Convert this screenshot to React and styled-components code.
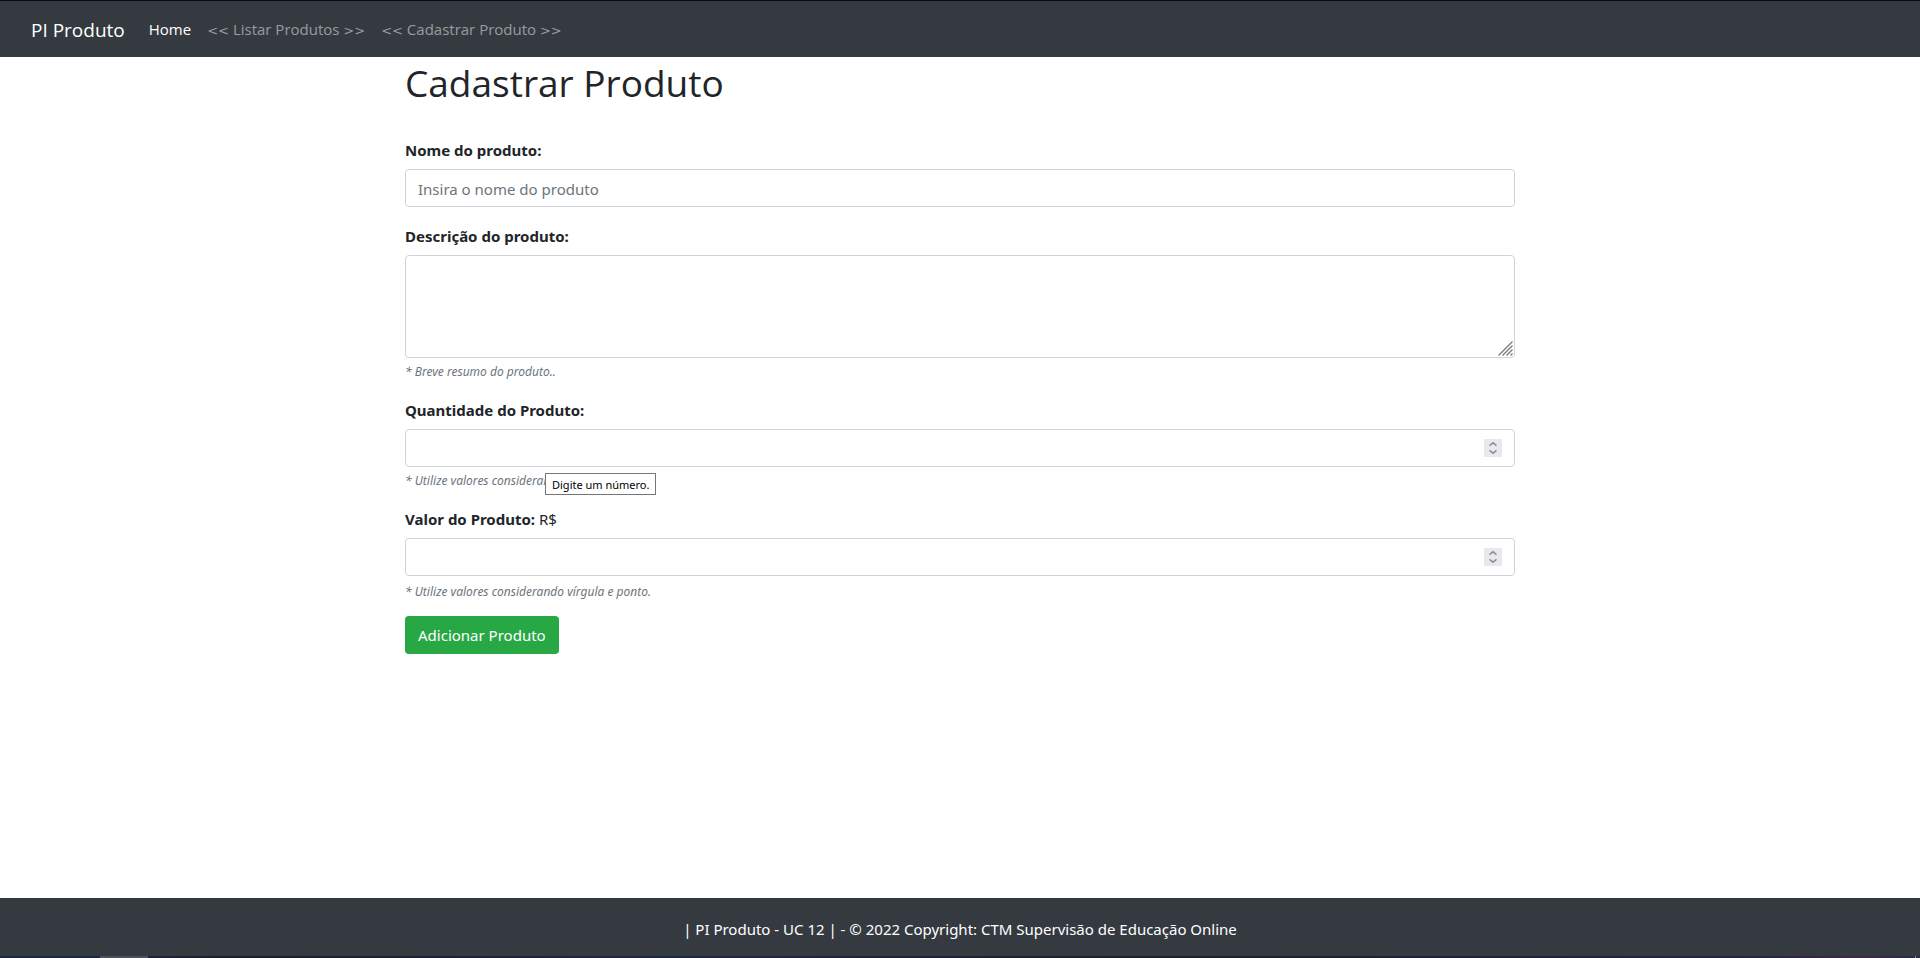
import React from "react";
import styled, { createGlobalStyle } from "styled-components";

const GlobalStyle = createGlobalStyle`
  *, *::before, *::after { box-sizing: border-box; }
  body {
    margin: 0;
    background: #fff;
    color: #212529;
    font-family: "Segoe UI", "Noto Sans", "Open Sans", sans-serif;
    font-size: 15px;
    line-height: 24px;
  }
`;

const Page = styled.div`
  min-height: 100vh;
  display: flex;
  flex-direction: column;
`;

const Navbar = styled.nav`
  display: flex;
  align-items: center;
  min-height: 57px;
  padding: 2px 31px 0;
  border-top: 1px solid #0c0c0e;
  background: #353a41;
`;

const Brand = styled.a`
  margin-right: 16px;
  color: #fff;
  font-family: "Segoe UI", "Open Sans", sans-serif;
  font-size: 19px;
  line-height: 30px;
  text-decoration: none;
  white-space: nowrap;
`;

const NavList = styled.ul`
  display: flex;
  margin: 0;
  padding: 0;
  list-style: none;
`;

const NavLink = styled.a`
  display: block;
  padding: 8px;
  color: ${(p) => (p.$active ? "#fff" : "#999c9f")};
  font-family: "Segoe UI", "Open Sans", sans-serif;
  text-decoration: none;
  white-space: nowrap;
`;

const Chevrons = styled.span`
  font-family: "DejaVu Sans", sans-serif;
  font-size: 13px;
`;

const Main = styled.main`
  flex: 1;
  width: 100%;
  max-width: 1140px;
  margin: 0 auto;
  padding: 0 15px 32px;
`;

const Title = styled.h1`
  margin: 0 0 28px;
  font-family: "Segoe UI", "Open Sans", sans-serif;
  font-size: 37px;
  font-weight: 400;
  line-height: 52px;
`;

const Field = styled.div`
  position: relative;
  margin-bottom: ${(p) => (p.$tight ? 12 : 16)}px;
`;

const Label = styled.label`
  display: block;
  margin-bottom: 6px;
  font-weight: ${(p) => (p.$plain ? 400 : 700)};
  line-height: 26px;
`;

const Control = styled.div`
  position: relative;
  display: flex;
`;

const Input = styled.input`
  width: 100%;
  height: 38px;
  padding: 8px 12px 6px;
  border: 1px solid #ced4da;
  border-radius: 4px;
  background: #fff;
  color: #495057;
  font: inherit;
  appearance: textfield;
  &::placeholder { color: #6c757d; opacity: 1; }
  &::-webkit-inner-spin-button { appearance: none; }
`;

const TextArea = styled(Input).attrs({ as: "textarea" })`
  height: 103px;
  resize: none;
`;

const Spinner = styled.svg`
  position: absolute;
  top: 10px;
  right: 13px;
  pointer-events: none;
`;

const Grip = styled.svg`
  position: absolute;
  right: 2px;
  bottom: 2px;
  pointer-events: none;
`;

const Help = styled.small`
  display: block;
  padding-top: ${(p) => (p.$tall ? 4 : 5)}px;
  color: #6c757d;
  font-size: 12px;
  font-style: italic;
  line-height: ${(p) => (p.$tall ? 24 : 18)}px;
`;

const Tooltip = styled.div`
  position: absolute;
  top: 76px;
  left: 140px;
  padding: 2px 6px 0;
  border: 1px solid #767676;
  background: #fff;
  color: #000;
  font-size: 11px;
  line-height: 18px;
  white-space: nowrap;
`;

const SubmitButton = styled.button`
  height: 38px;
  padding: 0 13px;
  border: 0;
  border-radius: 4px;
  background: #28a745;
  color: #fff;
  font: inherit;
`;

const Footer = styled.footer`
  padding: 19px 16px 15px;
  background: #353a41;
  color: #fff;
  text-align: center;
`;

const Taskbar = styled.div`
  display: flex;
  height: 2px;
  padding: 0 4px 0 100px;
  background: linear-gradient(90deg, #202741 0, #202741 6%, #1c1e27 12%, #202741 35%, #1f2029 60%, #20263f 90%, #3a2c42 97%, #292b48 100%);
`;

const ActiveTask = styled.div`
  width: 48px;
  background: #51515b;
`;

const ShowDesktop = styled.div`
  width: 1px;
  margin-left: auto;
  background: #8c8c98;
`;

function NumberControl({ id, step }) {
  return (
    <Control>
      <Input id={id} type="number" step={step} />
      <Spinner width="18" height="18" viewBox="0 0 18 18" fill="none" aria-hidden="true">
        <rect width="18" height="18" fill="#e9e9ed" />
        <path d="M5.5 6.7 9 3.8l3.5 2.9M5.5 11.3 9 14.2l3.5-2.9" stroke="#8f8f9d" strokeWidth="1.5" />
      </Spinner>
    </Control>
  );
}

function MenuItem({ children }) {
  return (
    <li>
      <NavLink href="#">
        <Chevrons>&lt;&lt;</Chevrons> {children} <Chevrons>&gt;&gt;</Chevrons>
      </NavLink>
    </li>
  );
}

export default function App() {
  return (
    <>
      <GlobalStyle />
      <Page>
        <Navbar>
          <Brand href="#">PI Produto</Brand>
          <NavList>
            <li><NavLink href="#" $active>Home</NavLink></li>
            <MenuItem>Listar Produtos</MenuItem>
            <MenuItem>Cadastrar Produto</MenuItem>
          </NavList>
        </Navbar>
        <Main>
          <Title>Cadastrar Produto</Title>
          <form onSubmit={(e) => e.preventDefault()}>
            <Field>
              <Label htmlFor="nome">Nome do produto:</Label>
              <Control>
                <Input id="nome" type="text" placeholder="Insira o nome do produto" />
              </Control>
            </Field>
            <Field>
              <Label htmlFor="descricao">Descrição do produto:</Label>
              <Control>
                <TextArea id="descricao" />
                <Grip width="15" height="15" viewBox="0 0 15 15" fill="none" aria-hidden="true">
                  <path d="M.5 14.5l14-14M4.5 14.5l10-10M8.5 14.5l6-6M12.5 14.5l2-2" stroke="#77777c" strokeWidth="1.3" />
                </Grip>
              </Control>
              <Help>* Breve resumo do produto..</Help>
            </Field>
            <Field>
              <Label htmlFor="quantidade">Quantidade do Produto:</Label>
              <NumberControl id="quantidade" step="1" />
              <Help>* Utilize valores considerando</Help>
              <Tooltip role="tooltip">Digite um número.</Tooltip>
            </Field>
            <Field $tight>
              <Label htmlFor="valor" $plain><b>Valor do Produto:</b> R$</Label>
              <NumberControl id="valor" step="0.01" />
              <Help $tall>* Utilize valores considerando vírgula e ponto.</Help>
            </Field>
            <SubmitButton type="submit">Adicionar Produto</SubmitButton>
          </form>
        </Main>
        <Footer>| PI Produto - UC 12 | - © 2022 Copyright: CTM Supervisão de Educação Online</Footer>
        <Taskbar>
          <ActiveTask />
          <ShowDesktop />
        </Taskbar>
      </Page>
    </>
  );
}
